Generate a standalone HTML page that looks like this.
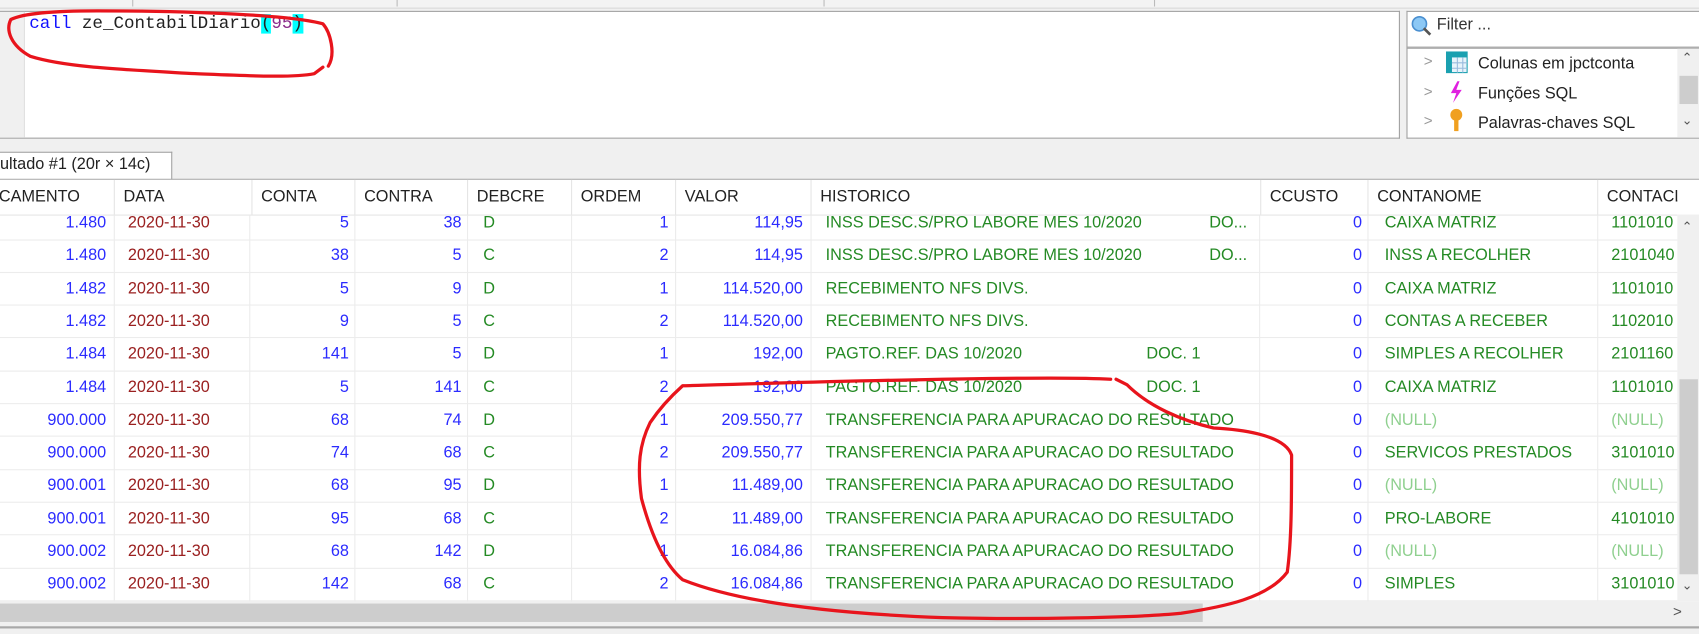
<!DOCTYPE html>
<html><head><meta charset="utf-8"><style>
html,body{margin:0;padding:0;width:1699px;height:634px;overflow:hidden;background:#f0f0f0}
#w{position:absolute;left:0;top:0;width:1568px;height:585px;transform:scale(1.08355);transform-origin:0 0;font-family:"Liberation Sans",sans-serif;font-size:15px}
.a{position:absolute}
.c{position:absolute;white-space:nowrap;line-height:30px}
.r{text-align:right}
.b{color:#2b2bff}.d{color:#9a2020}.g{color:#248a24}.n{color:#8fd08f}
.hdr{position:absolute;left:0;top:166px;width:1548px;height:32px;background:#fff;border-bottom:1px solid #e5e5e5;z-index:2}
.hdr div{position:absolute;top:0;line-height:32px;color:#222;border-left:1px solid #e5e5e5;padding-left:8px;height:32px}
</style></head><body><div id="w">
<div class="a" style="left:0;top:0;width:1568px;height:7px;background:#f3f3f3;border-bottom:1px solid #d8d8d8"></div>
<div class="a" style="left:122px;top:0;width:1px;height:6px;background:#bbb"></div>
<div class="a" style="left:366px;top:0;width:1px;height:6px;background:#bbb"></div>
<div class="a" style="left:760px;top:0;width:1px;height:6px;background:#bbb"></div>
<div class="a" style="left:1065px;top:0;width:1px;height:6px;background:#bbb"></div>
<div class="a" style="left:0;top:10px;width:1291px;height:116px;background:#fff;border:1px solid #a0a0a0;border-left:none"></div>
<div class="a" style="left:0;top:11px;width:22px;height:116px;background:#f0f0f0;border-right:1px solid #e0e0e0"></div>
<div class="a" style="left:27px;top:12px;font-family:'Liberation Mono',monospace;font-size:16.2px;line-height:20px;color:#222;white-space:pre"><span style="color:#1010ff">call</span> ze_ContabilDiario<span style="background:#00ffff">(</span><span style="color:#8a2a8a">95</span><span style="background:#00ffff">)</span></div>
<div class="a" style="left:1298px;top:10px;width:270px;height:32px;background:#fff;border:1px solid #a0a0a0;border-right:none"></div>
<svg class="a" style="left:1301px;top:13px" width="22" height="22"><circle cx="9" cy="9" r="6.5" fill="#8cc8f5" stroke="#4a8fd0" stroke-width="1.5"/><line x1="13" y1="13" x2="19" y2="19" stroke="#555" stroke-width="2.5"/></svg>
<div class="a" style="left:1326px;top:14px;color:#333;font-size:15px">Filter ...</div>
<div class="a" style="left:1298px;top:44px;width:270px;height:82px;background:#fff;border:1px solid #a0a0a0;border-right:none"></div>
<div class="a" style="left:1548px;top:45px;width:20px;height:82px;background:#f0f0f0"></div>
<div class="a" style="left:1550px;top:70px;width:17px;height:26px;background:#cdcdcd"></div>
<div class="a" style="left:1552px;top:46px;color:#555;font-size:12px">&#8963;</div>
<div class="a" style="left:1552px;top:104px;color:#555;font-size:12px">&#8964;</div>
<div class="a" style="left:1314px;top:48px;color:#999;font-size:14px">&gt;</div>
<div class="a" style="left:1314px;top:76px;color:#999;font-size:14px">&gt;</div>
<div class="a" style="left:1314px;top:103px;color:#999;font-size:14px">&gt;</div>
<svg class="a" style="left:1334px;top:47px" width="22" height="22"><rect x="1" y="1" width="19" height="19" fill="#e8f4fb" stroke="#1aa0b0"/><rect x="1" y="1" width="19" height="5" fill="#1aa0b0"/><rect x="1" y="1" width="5" height="19" fill="#1aa0b0"/><path d="M11 6v14M16 6v14M6 11h14M6 16h14" stroke="#9bd" /></svg>
<svg class="a" style="left:1336px;top:74px" width="16" height="22"><path d="M9 1L3 12h5l-3 9 8-12H8l3-8z" fill="#e020e0"/></svg>
<svg class="a" style="left:1336px;top:100px" width="16" height="22"><circle cx="8" cy="6" r="5.5" fill="#f0a020"/><rect x="6" y="10" width="4" height="11" fill="#f0a020"/></svg>
<div class="a" style="left:1364px;top:45px;color:#222;line-height:27.5px;font-size:15px">Colunas em jpctconta<br>Funções SQL<br>Palavras-chaves SQL</div>
<div class="a" style="left:0;top:140px;width:158px;height:25px;background:#fff;border:1px solid #a0a0a0;border-bottom:none;border-left:none"></div>
<div class="a" style="left:0;top:143px;color:#222;font-size:15px">ultado #1 (20r × 14c)</div>
<div class="a" style="left:0;top:165px;width:1568px;height:1px;background:#a0a0a0"></div>
<div class="a" style="left:0;top:166px;width:1568px;height:390px;background:#fff;overflow:hidden" id="g"></div>
<div class="hdr">
<div style="left:-9px;border:none">CAMENTO</div><div style="left:105px">DATA</div><div style="left:232px">CONTA</div><div style="left:327px">CONTRA</div><div style="left:431px">DEBCRE</div><div style="left:527px">ORDEM</div><div style="left:623px">VALOR</div><div style="left:748px">HISTORICO</div><div style="left:1163px">CCUSTO</div><div style="left:1262px">CONTANOME</div><div style="left:1474px">CONTACLA</div>
</div>
<div class="a" style="left:1548px;top:166px;width:20px;height:32px;background:#fff;z-index:2"></div>
<div class="a" style="left:1548px;top:198px;width:20px;height:357px;background:#f0f0f0;z-index:2"></div>
<div class="a" style="left:1550px;top:350px;width:17px;height:180px;background:#cdcdcd;z-index:2"></div>
<div class="a" style="left:1552px;top:202px;color:#555;font-size:12px;z-index:2">&#8963;</div>
<div class="a" style="left:1552px;top:533px;color:#555;font-size:12px;z-index:2">&#8964;</div>
<div class="a" style="left:0;top:555px;width:1568px;height:20px;background:#f0f0f0;z-index:2"></div>
<div class="a" style="left:0;top:557px;width:1110px;height:17px;background:#cdcdcd;z-index:2"></div>
<div class="a" style="left:1544px;top:556px;color:#555;font-size:14px;z-index:2">&gt;</div>
<div class="a" style="left:0;top:578px;width:1568px;height:2px;background:#a8a8a8;z-index:2"></div>
<svg class="a" style="left:0;top:0;z-index:5" width="1568" height="585"><g fill="none" stroke="#e8141c" stroke-width="3" stroke-linecap="round" stroke-linejoin="round">
<path d="M303 61C310 50 305 30 298 22 C270 14 180 10 90 10 C50 10 22 12 10 18 C5 28 10 42 28 52 C60 62 110 64 180 68 C230 70 270 72 290 68 L298 62"/>
<path d="M1025 350C960 346 700 354 630 356 C620 365 608 378 600 390 C590 410 588 430 592 460 C600 490 612 520 630 535 C680 555 760 566 870 570 C950 572 1050 570 1090 566 C1130 560 1170 552 1188 528 C1192 500 1192 460 1192 420 C1185 400 1140 396 1120 395 C1090 388 1060 375 1040 355 L1030 350"/>
</g></svg>
<script>
var rows=[
["1.480","5","38","D","1","114,95","INSS DESC.S/PRO LABORE MES 10/2020","DO...","CAIXA MATRIZ","1101010"],
["1.480","38","5","C","2","114,95","INSS DESC.S/PRO LABORE MES 10/2020","DO...","INSS A RECOLHER","2101040"],
["1.482","5","9","D","1","114.520,00","RECEBIMENTO NFS DIVS.","","CAIXA MATRIZ","1101010"],
["1.482","9","5","C","2","114.520,00","RECEBIMENTO NFS DIVS.","","CONTAS A RECEBER","1102010"],
["1.484","141","5","D","1","192,00","PAGTO.REF. DAS 10/2020","DOC. 1","SIMPLES A RECOLHER","2101160"],
["1.484","5","141","C","2","192,00","PAGTO.REF. DAS 10/2020","DOC. 1","CAIXA MATRIZ","1101010"],
["900.000","68","74","D","1","209.550,77","TRANSFERENCIA PARA APURACAO DO RESULTADO","","(NULL)","(NULL)"],
["900.000","74","68","C","2","209.550,77","TRANSFERENCIA PARA APURACAO DO RESULTADO","","SERVICOS PRESTADOS","3101010"],
["900.001","68","95","D","1","11.489,00","TRANSFERENCIA PARA APURACAO DO RESULTADO","","(NULL)","(NULL)"],
["900.001","95","68","C","2","11.489,00","TRANSFERENCIA PARA APURACAO DO RESULTADO","","PRO-LABORE","4101010"],
["900.002","68","142","D","1","16.084,86","TRANSFERENCIA PARA APURACAO DO RESULTADO","","(NULL)","(NULL)"],
["900.002","142","68","C","2","16.084,86","TRANSFERENCIA PARA APURACAO DO RESULTADO","","SIMPLES","3101010"]];
var h="",lines=[105,230,327,431,527,623,748,1162,1262,1474];
for(var i=0;i<lines.length;i++)h+='<div class="a" style="left:'+lines[i]+'px;top:0;width:1px;height:390px;background:#ececec"></div>';
for(var i=0;i<rows.length;i++){var r=rows[i],y=25+i*30.3;
h+='<div class="a" style="left:0;top:'+(y+29.5)+'px;width:1548px;height:1px;background:#ececec"></div>';
function c(x,w,cl,t,right){h+='<div class="c '+cl+(right?' r':'')+'" style="left:'+x+'px;top:'+y+'px;width:'+w+'px">'+t+'</div>';}
c(0,98,"b",r[0],1);c(118,100,"d","2020-11-30");c(230,92,"b",r[1],1);c(327,99,"b",r[2],1);c(446,40,"g",r[3]);
c(527,90,"b",r[4],1);c(623,118,"b",r[5],1);c(762,400,"g",r[6]);
if(r[7])c(r[7]=="DO..."?1116:1058,60,"g",r[7]);
c(1162,95,"b","0",1);c(1278,190,r[8]=="(NULL)"?"n":"g",r[8]);c(1487,80,r[9]=="(NULL)"?"n":"g",r[9]);}
document.getElementById("g").innerHTML=h;
</script>
</div></body></html>
